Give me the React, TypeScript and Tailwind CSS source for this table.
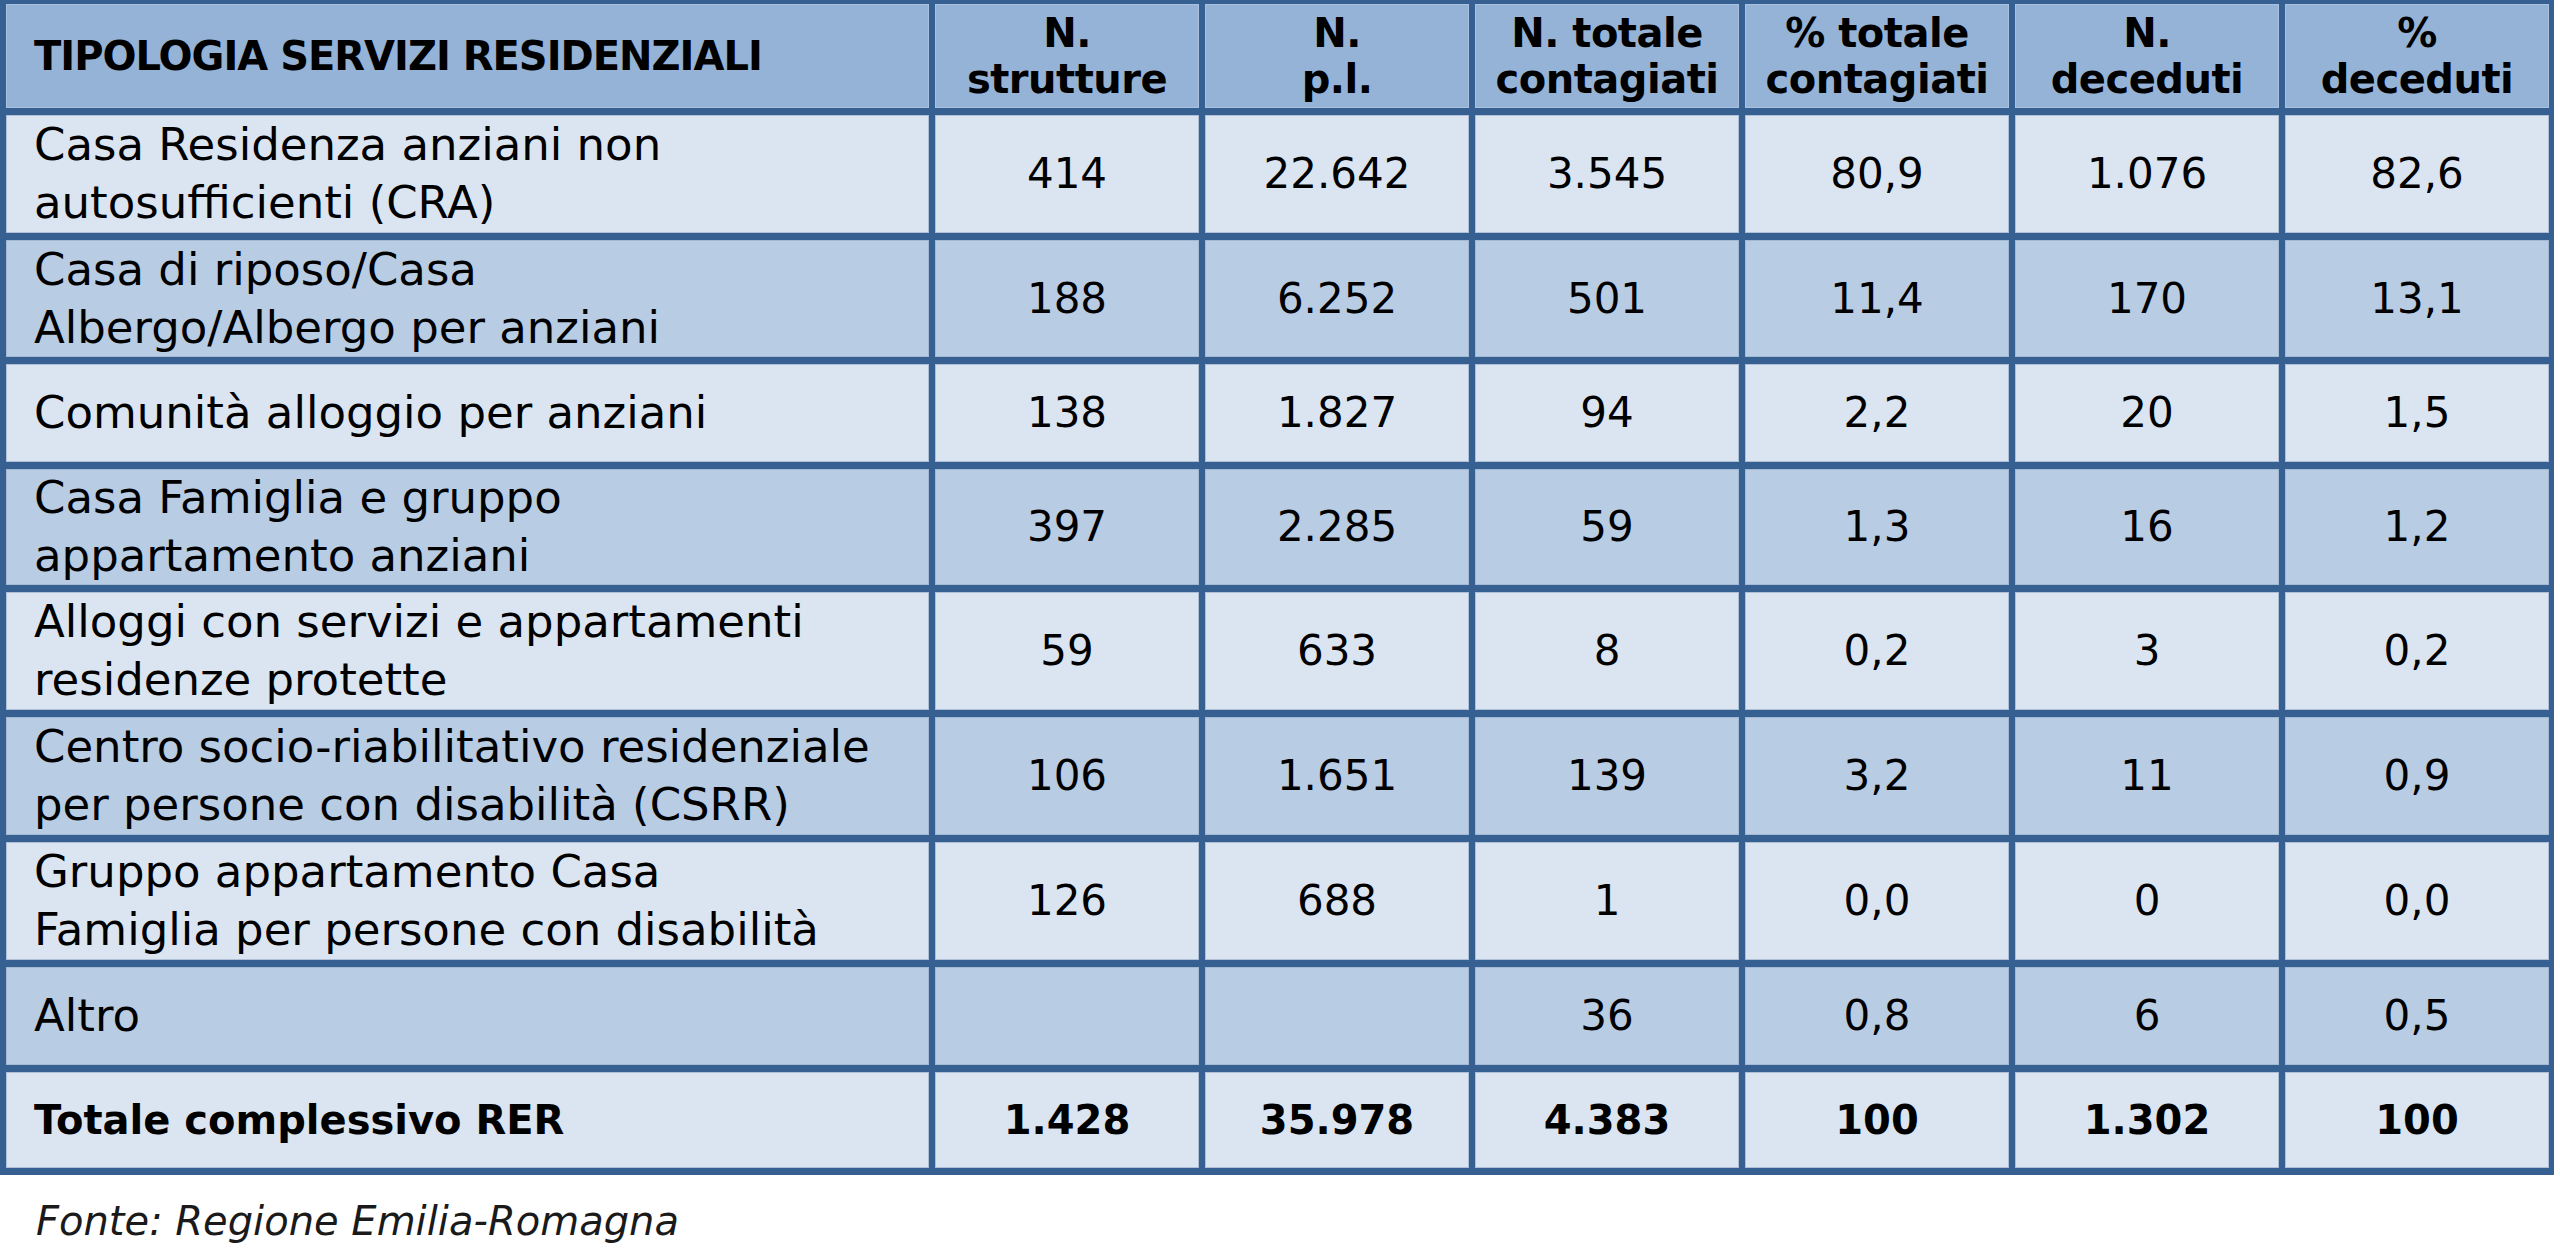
import React from "react";

type Row = {
  label: string[];
  values: string[];
  tone: "light" | "mid";
  bold?: boolean;
};

const headers: string[][] = [
  ["N.", "strutture"],
  ["N.", "p.l."],
  ["N. totale", "contagiati"],
  ["% totale", "contagiati"],
  ["N.", "deceduti"],
  ["%", "deceduti"],
];

const rows: Row[] = [
  {
    label: ["Casa Residenza anziani non", "autosufficienti (CRA)"],
    values: ["414", "22.642", "3.545", "80,9", "1.076", "82,6"],
    tone: "light",
  },
  {
    label: ["Casa di riposo/Casa", "Albergo/Albergo per anziani"],
    values: ["188", "6.252", "501", "11,4", "170", "13,1"],
    tone: "mid",
  },
  {
    label: ["Comunità alloggio per anziani"],
    values: ["138", "1.827", "94", "2,2", "20", "1,5"],
    tone: "light",
  },
  {
    label: ["Casa Famiglia e gruppo", "appartamento anziani"],
    values: ["397", "2.285", "59", "1,3", "16", "1,2"],
    tone: "mid",
  },
  {
    label: ["Alloggi con servizi e appartamenti", "residenze protette"],
    values: ["59", "633", "8", "0,2", "3", "0,2"],
    tone: "light",
  },
  {
    label: ["Centro socio-riabilitativo residenziale", "per persone con disabilità (CSRR)"],
    values: ["106", "1.651", "139", "3,2", "11", "0,9"],
    tone: "mid",
  },
  {
    label: ["Gruppo appartamento Casa", "Famiglia per persone con disabilità"],
    values: ["126", "688", "1", "0,0", "0", "0,0"],
    tone: "light",
  },
  {
    label: ["Altro"],
    values: ["", "", "36", "0,8", "6", "0,5"],
    tone: "mid",
  },
  {
    label: ["Totale complessivo RER"],
    values: ["1.428", "35.978", "4.383", "100", "1.302", "100"],
    tone: "light",
    bold: true,
  },
];

function Cell({
  tone,
  align,
  children,
}: {
  tone: "head" | "light" | "mid";
  align: "left" | "center";
  children: React.ReactNode;
}) {
  const bg =
    tone === "head"
      ? "bg-[#95b3d7] border-[#a9c1de]"
      : tone === "light"
        ? "bg-[#dbe5f1] border-[#aebfd6]"
        : "bg-[#b8cce4] border-[#a3b8d3]";
  return (
    <div
      className={`flex items-center border ${bg} ${
        align === "left" ? "justify-start pl-[27px]" : "justify-center text-center"
      }`}
    >
      {children}
    </div>
  );
}

export default function App() {
  return (
    <div className="min-h-screen bg-white text-black font-['DejaVu_Sans',sans-serif]">
      <div className="w-[2554px] bg-[#376092] pt-[4px] pb-[7px] pl-[6px] pr-[6px]">
        <div className="grid grid-cols-[923px_repeat(6,264px)] grid-rows-[104px_118px_117px_98px_116px_118px_118px_118px_98px_96px] gap-x-[6px] gap-y-[7px]">
          {/* Header */}
          <Cell tone="head" align="left">
            <span className="text-[40px] font-bold tracking-[-1px] leading-none">
              TIPOLOGIA SERVIZI RESIDENZIALI
            </span>
          </Cell>
          {headers.map((h, i) => (
            <Cell key={i} tone="head" align="center">
              <div className="text-[40px] font-bold leading-[46px] tracking-[-0.5px]">
                {h.map((line, j) => (
                  <div key={j}>{line}</div>
                ))}
              </div>
            </Cell>
          ))}

          {/* Body */}
          {rows.map((row, r) => (
            <React.Fragment key={r}>
              <Cell tone={row.tone} align="left">
                <div
                  className={
                    row.bold
                      ? "text-[40px] font-bold leading-[48px]"
                      : "text-[45px] leading-[58px] whitespace-nowrap"
                  }
                >
                  {row.label.map((line, j) => (
                    <div key={j}>{line}</div>
                  ))}
                </div>
              </Cell>
              {row.values.map((v, i) => (
                <Cell key={i} tone={row.tone} align="center">
                  <span
                    className={
                      row.bold
                        ? "text-[40px] font-bold leading-none"
                        : "text-[42px] leading-none"
                    }
                  >
                    {v}
                  </span>
                </Cell>
              ))}
            </React.Fragment>
          ))}
        </div>
      </div>

      <p className="mt-[22px] pl-[36px] text-[40px] italic leading-[48px] text-[#1a1a1a]">
        Fonte: Regione Emilia-Romagna
      </p>
    </div>
  );
}
